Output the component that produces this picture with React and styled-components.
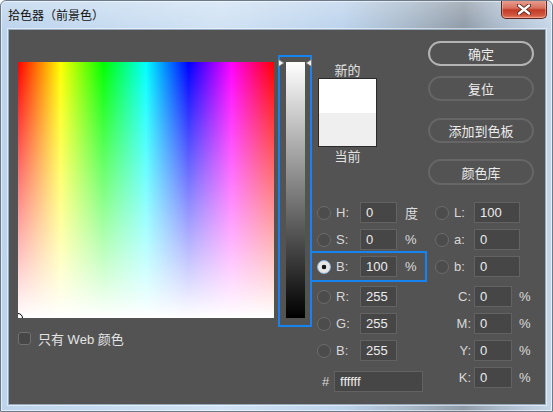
import React from 'react';
import styled, { createGlobalStyle, css } from 'styled-components';

const GlobalStyle = createGlobalStyle`
  html, body { margin: 0; padding: 0; background: #ffffff; }
  body { font-family: "Liberation Sans", "Noto Sans CJK SC", sans-serif; }
`;

const Window = styled.div`
  box-sizing: border-box;
  width: 553px;
  height: 412px;
  display: flex;
  flex-direction: column;
  border: 1px solid #6c7b8b;
  border-radius: 6px 6px 0 0;
  background: linear-gradient(to right, #bdd4ed 0%, #c6dbf0 20%, #d0e2f4 40%, #bcd3ec 62%, #a7b8c9 74%, #8f9ba8 84%, #a9b9ca 90%, #c6d7e9 100%);
  box-shadow: inset 0 0 0 1px rgba(255, 255, 255, 0.55);
  overflow: hidden;
`;

const TitleBar = styled.div`
  height: 28px;
  display: flex;
  justify-content: space-between;
  align-items: flex-start;
  padding-left: 7px;
  background: linear-gradient(to bottom, rgba(255, 255, 255, 0.25), rgba(255, 255, 255, 0));
`;

const Title = styled.div`
  margin-top: 7px;
  font-family: "Noto Sans CJK SC", sans-serif;
  font-size: 12px;
  line-height: 14px;
  color: #111;
`;

const CloseButton = styled.div`
  box-sizing: border-box;
  width: 46px;
  height: 19px;
  margin-right: 5px;
  margin-top: -1px;
  display: flex;
  align-items: center;
  justify-content: center;
  border: 1px solid #5a2a22;
  border-top: none;
  border-radius: 0 0 5px 5px;
  background: linear-gradient(to bottom, #e9a295 0%, #d8705f 45%, #c23b25 55%, #d2563f 85%, #e9866f 100%);
  box-shadow: inset 0 0 0 1px rgba(255, 200, 190, 0.45);
`;

const Panel = styled.div`
  box-sizing: border-box;
  width: 538px;
  height: 376px;
  margin-left: 7px;
  display: flex;
  align-items: flex-start;
  padding-left: 9px;
  background: #535353;
  border: 1px solid #97aabd;
  box-shadow: 0 0 0 1px rgba(255, 255, 255, 0.5);
`;

const LeftCol = styled.div`
  margin-top: 32px;
  display: flex;
  flex-direction: column;
`;

const Spectrum = styled.div`
  position: relative;
  width: 256px;
  height: 256px;
  overflow: hidden;
  background:
    linear-gradient(to bottom, rgba(255, 255, 255, 0), #ffffff),
    linear-gradient(to right, #ff0000 0%, #ffff00 16.67%, #00ff00 33.33%, #00ffff 50%, #0000ff 66.67%, #ff00ff 83.33%, #ff0000 100%);
`;

const Picker = styled.div`
  position: absolute;
  left: -5px;
  bottom: -5px;
  width: 8px;
  height: 8px;
  border: 1.5px solid #000;
  border-radius: 50%;
`;

const WebRow = styled.div`
  margin-top: 13px;
  display: flex;
  align-items: center;
  gap: 7px;
  height: 14px;
  font-family: "Liberation Sans", "Noto Sans CJK SC", sans-serif;
  font-size: 13px;
  color: #e4e4e4;
`;

const CheckBox = styled.div`
  box-sizing: border-box;
  width: 13px;
  height: 13px;
  border: 1px solid #707070;
  border-radius: 3px;
  background: #474747;
`;

const SliderFrame = styled.div`
  position: relative;
  box-sizing: border-box;
  width: 34px;
  height: 272px;
  margin-left: 4px;
  margin-top: 25px;
  padding: 5px 5px 0 6px;
  border: 2px solid #1583f0;
`;

const Strip = styled.div`
  width: 19px;
  height: 256px;
  background: linear-gradient(to bottom, #ffffff, #000000);
`;

const Arrow = styled.svg`
  position: absolute;
  top: 2px;
  ${(p) => (p.$side === 'left' ? css`left: -2px;` : css`right: -2px;`)}
`;

const RightArea = styled.div`
  width: 233px;
  display: flex;
  flex-direction: column;
`;

const TopSection = styled.div`
  height: 169px;
  display: flex;
  align-items: flex-start;
`;

const PreviewCol = styled.div`
  margin-left: 6px;
  margin-top: 31px;
  width: 59px;
  display: flex;
  flex-direction: column;
  align-items: center;
`;

const PreviewLabel = styled.div`
  font-family: "Noto Sans CJK SC", sans-serif;
  font-size: 13px;
  line-height: 17px;
  color: #e2e2e2;
`;

const PreviewBox = styled.div`
  box-sizing: border-box;
  width: 59px;
  height: 69px;
  border: 1px solid #2a2a2a;
  display: flex;
  flex-direction: column;
`;

const Swatch = styled.div`
  flex: 1;
  background: ${(p) => p.$color};
`;

const ButtonCol = styled.div`
  margin-left: 51px;
  padding-top: 11px;
  width: 106px;
  display: flex;
  flex-direction: column;
`;

const Button = styled.div`
  box-sizing: border-box;
  height: ${(p) => p.$h || 25}px;
  margin-top: ${(p) => p.$mt || 0}px;
  display: flex;
  align-items: center;
  justify-content: center;
  border-radius: 13px;
  border: 2px solid ${(p) => (p.$primary ? '#b4b4b4' : '#666666')};
  font-family: "Noto Sans CJK SC", sans-serif;
  font-size: 13px;
  color: #ececec;
`;

const Fields = styled.div`
  display: flex;
  flex-direction: column;
`;

const FieldRow = styled.div`
  height: 27px;
  display: flex;
  align-items: center;
  margin-top: ${(p) => p.$mt || 0}px;
`;

const ChannelGroup = styled.div`
  position: relative;
  box-sizing: border-box;
  width: 123px;
  height: 27px;
  padding-left: 5px;
  display: flex;
  align-items: center;
  ${(p) =>
    p.$active &&
    css`
      &::before {
        content: '';
        position: absolute;
        left: -2px;
        top: -2px;
        bottom: -2px;
        right: 8px;
        border: 2px solid #1583f0;
      }
    `}
`;

const HexGroup = styled.div`
  box-sizing: border-box;
  width: 123px;
  align-self: flex-start;
  margin-top: 7px;
  padding-left: 10px;
  display: flex;
  align-items: center;
`;

const SideGroup = styled.div`
  display: flex;
  align-items: center;
`;

const Radio = styled.div`
  box-sizing: border-box;
  width: 14px;
  height: 14px;
  border-radius: 50%;
  border: 1px solid ${(p) => (p.$checked ? '#8fb4e0' : '#6c6c6c')};
  background: ${(p) =>
    p.$checked
      ? 'radial-gradient(circle, #151515 0, #151515 2px, #e6e6e6 2.6px)'
      : '#4c4c4c'};
`;

const Label = styled.div`
  box-sizing: border-box;
  width: ${(p) => p.$w}px;
  margin-left: ${(p) => p.$ml || 0}px;
  padding-right: ${(p) => (p.$right ? 3 : 0)}px;
  text-align: ${(p) => (p.$right ? 'right' : 'left')};
  font-size: 13px;
  color: #d8d8d8;
`;

const Field = styled.div`
  box-sizing: border-box;
  width: ${(p) => p.$w}px;
  height: 21px;
  margin-left: ${(p) => p.$ml || 0}px;
  padding-left: 5px;
  display: flex;
  align-items: center;
  background: #464646;
  border: 1px solid #626262;
  font-size: 13px;
  color: #ececec;
`;

const Unit = styled.div`
  margin-left: ${(p) => p.$ml}px;
  font-family: "Liberation Sans", "Noto Sans CJK SC", sans-serif;
  font-size: 13px;
  color: #dcdcdc;
`;

const hsb = [
  { k: 'H', v: '0', unit: '度', lab: 'L', lv: '100' },
  { k: 'S', v: '0', unit: '%', lab: 'a', lv: '0' },
  { k: 'B', v: '100', unit: '%', lab: 'b', lv: '0', active: true },
];

const rgb = [
  { k: 'R', v: '255', c: 'C' },
  { k: 'G', v: '255', c: 'M' },
  { k: 'B', v: '255', c: 'Y' },
];

function CmykGroup({ name }) {
  return (
    <SideGroup>
      <Label $w={39} $right>{name}:</Label>
      <Field $w={38}>0</Field>
      <Unit $ml={7}>%</Unit>
    </SideGroup>
  );
}

export default function App() {
  return (
    <>
      <GlobalStyle />
      <Window>
        <TitleBar>
          <Title>拾色器（前景色）</Title>
          <CloseButton>
            <svg width="14" height="11" viewBox="0 0 14 11">
              <path d="M2 1.5 L12 9.5 M12 1.5 L2 9.5" stroke="#4a1c16" strokeWidth="4" strokeLinecap="round" />
              <path d="M2 1.5 L12 9.5 M12 1.5 L2 9.5" stroke="#ffffff" strokeWidth="2.4" strokeLinecap="round" />
            </svg>
          </CloseButton>
        </TitleBar>

        <Panel>
          <LeftCol>
            <Spectrum>
              <Picker />
            </Spectrum>
            <WebRow>
              <CheckBox />
              只有 Web 颜色
            </WebRow>
          </LeftCol>

          <SliderFrame>
            <Strip />
            <Arrow $side="left" width="7" height="8" viewBox="0 0 7 8">
              <path d="M0.5 0.5 L6 4 L0.5 7.5 Z" fill="#f2f2f2" stroke="#777" strokeWidth="0.8" />
            </Arrow>
            <Arrow $side="right" width="7" height="8" viewBox="0 0 7 8">
              <path d="M6.5 0.5 L1 4 L6.5 7.5 Z" fill="#f2f2f2" stroke="#777" strokeWidth="0.8" />
            </Arrow>
          </SliderFrame>

          <RightArea>
            <TopSection>
              <PreviewCol>
                <PreviewLabel>新的</PreviewLabel>
                <PreviewBox>
                  <Swatch $color="#ffffff" />
                  <Swatch $color="#efefef" />
                </PreviewBox>
                <PreviewLabel>当前</PreviewLabel>
              </PreviewCol>
              <ButtonCol>
                <Button $primary>确定</Button>
                <Button $mt={10}>复位</Button>
                <Button $mt={17}>添加到色板</Button>
                <Button $mt={16} $h={26}>颜色库</Button>
              </ButtonCol>
            </TopSection>

            <Fields>
              {hsb.map((r) => (
                <FieldRow key={r.k}>
                  <ChannelGroup $active={r.active}>
                    <Radio $checked={r.active} />
                    <Label $w={24} $ml={5}>{r.k}:</Label>
                    <Field $w={37}>{r.v}</Field>
                    <Unit $ml={8}>{r.unit}</Unit>
                  </ChannelGroup>
                  <SideGroup>
                    <Radio />
                    <Label $w={20} $ml={5}>{r.lab}:</Label>
                    <Field $w={46}>{r.lv}</Field>
                  </SideGroup>
                </FieldRow>
              ))}
              {rgb.map((r, i) => (
                <FieldRow key={r.c} $mt={i === 0 ? 3 : 0}>
                  <ChannelGroup>
                    <Radio />
                    <Label $w={24} $ml={5}>{r.k}:</Label>
                    <Field $w={37}>{r.v}</Field>
                  </ChannelGroup>
                  <CmykGroup name={r.c} />
                </FieldRow>
              ))}
              <FieldRow>
                <HexGroup>
                  <Label $w={12}>#</Label>
                  <Field $w={89}>ffffff</Field>
                </HexGroup>
                <CmykGroup name="K" />
              </FieldRow>
            </Fields>
          </RightArea>
        </Panel>
      </Window>
    </>
  );
}
